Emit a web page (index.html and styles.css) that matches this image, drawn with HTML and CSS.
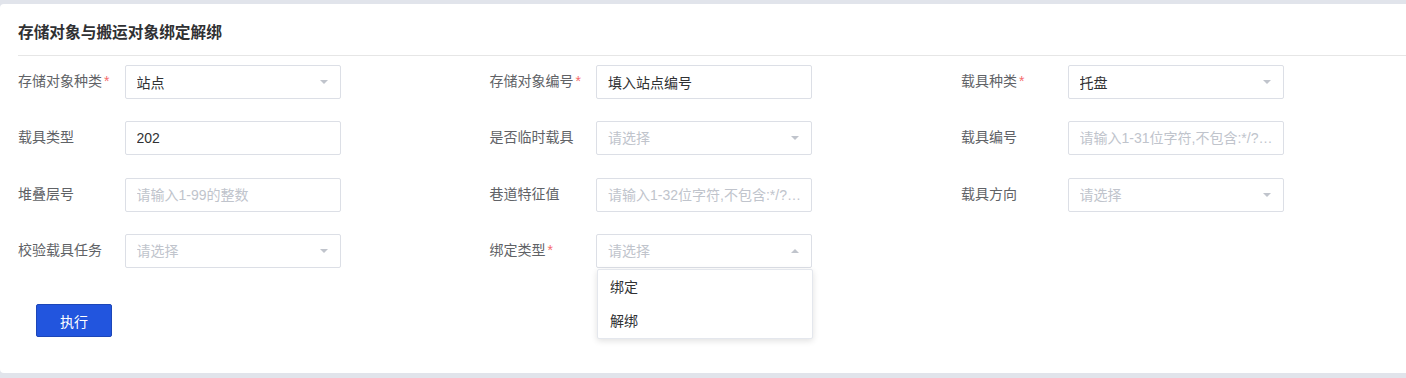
FILE: index.html
```html
<!DOCTYPE html>
<html lang="zh-CN">
<head>
    <meta charset="UTF-8">
    <meta name="viewport" content="width=device-width, initial-scale=1.0">
    <title>存储对象与搬运对象绑定解绑</title>
    <link rel="stylesheet" href="styles.css">
</head>
<body>
    <div class="card">
        <div class="card-header">存储对象与搬运对象绑定解绑</div>
        <div class="card-body">
            <div class="form-grid">
                <!-- row 1 -->
                <div class="form-item">
                    <label class="form-label required">存储对象种类</label>
                    <div class="field">
                        <input class="field-input" type="text" value="站点" readonly>
                        <span class="arrow"></span>
                    </div>
                </div>
                <div class="form-item">
                    <label class="form-label required">存储对象编号</label>
                    <div class="field">
                        <input class="field-input" type="text" value="填入站点编号">
                    </div>
                </div>
                <div class="form-item">
                    <label class="form-label required">载具种类</label>
                    <div class="field">
                        <input class="field-input" type="text" value="托盘" readonly>
                        <span class="arrow"></span>
                    </div>
                </div>

                <!-- row 2 -->
                <div class="form-item">
                    <label class="form-label">载具类型</label>
                    <div class="field">
                        <input class="field-input" type="text" value="202">
                    </div>
                </div>
                <div class="form-item">
                    <label class="form-label">是否临时载具</label>
                    <div class="field">
                        <input class="field-input" type="text" placeholder="请选择" readonly>
                        <span class="arrow"></span>
                    </div>
                </div>
                <div class="form-item">
                    <label class="form-label">载具编号</label>
                    <div class="field">
                        <input class="field-input" type="text" placeholder='请输入1-31位字符,不包含:*/?"<>|\'>
                    </div>
                </div>

                <!-- row 3 -->
                <div class="form-item">
                    <label class="form-label">堆叠层号</label>
                    <div class="field">
                        <input class="field-input" type="text" placeholder="请输入1-99的整数">
                    </div>
                </div>
                <div class="form-item">
                    <label class="form-label">巷道特征值</label>
                    <div class="field">
                        <input class="field-input" type="text" placeholder='请输入1-32位字符,不包含:*/?"<>|\'>
                    </div>
                </div>
                <div class="form-item">
                    <label class="form-label">载具方向</label>
                    <div class="field">
                        <input class="field-input" type="text" placeholder="请选择" readonly>
                        <span class="arrow"></span>
                    </div>
                </div>

                <!-- row 4 -->
                <div class="form-item">
                    <label class="form-label">校验载具任务</label>
                    <div class="field">
                        <input class="field-input" type="text" placeholder="请选择" readonly>
                        <span class="arrow"></span>
                    </div>
                </div>
                <div class="form-item">
                    <label class="form-label required">绑定类型</label>
                    <div class="field is-open">
                        <input class="field-input" type="text" placeholder="请选择" readonly>
                        <span class="arrow arrow-up"></span>
                        <ul class="dropdown">
                            <li class="dropdown-item">绑定</li>
                            <li class="dropdown-item">解绑</li>
                        </ul>
                    </div>
                </div>
            </div>

            <div class="actions">
                <button class="btn-primary">执行</button>
            </div>
        </div>
    </div>
</body>
</html>
```

FILE: styles.css
```css
body {
    margin: 0;
    padding-top: 4px;
    background-color: #e1e4eb;
    font-family: "Liberation Sans", "Noto Sans CJK SC", sans-serif;
    font-size: 14px;
    color: #303133;
}
.card {
    height: 369px;
    background-color: #fff;
    border-radius: 4px 0 0 4px;
    box-sizing: border-box;
}
.card-header {
    margin-left: 18px;
    padding: 18px 0 11px;
    line-height: 22px;
    font-size: 15.7px;
    font-weight: bold;
    color: #303133;
    border-bottom: 1px solid #e6e6e6;
}
.card-body {
    padding: 9px 0 0 18px;
}
.form-grid {
    display: grid;
    grid-template-columns: 471.5px 471.5px 1fr;
    row-gap: 22.4px;
}
.form-item {
    display: flex;
    align-items: center;
    height: 34px;
}
.form-label {
    width: 106.5px;
    flex-shrink: 0;
    color: #606266;
    line-height: 20px;
    margin-top: -2px;
}
.form-label.required::after {
    content: "*";
    color: #f56c6c;
    margin-left: 2px;
}
.field {
    position: relative;
    display: flex;
    align-items: center;
    width: 216px;
    height: 34px;
    box-sizing: border-box;
    border: 1px solid #dcdfe6;
    border-radius: 2px;
    background-color: #fff;
}
.field-input {
    flex: 1;
    min-width: 0;
    height: 100%;
    padding: 0 6px 0 11px;
    border: none;
    outline: none;
    background: transparent;
    font-family: inherit;
    font-size: 14px;
    color: #303133;
    text-overflow: ellipsis;
}
.field-input::placeholder {
    color: #c0c4cc;
}
.arrow {
    flex-shrink: 0;
    width: 0;
    height: 0;
    margin-right: 12px;
    border-left: 4.5px solid transparent;
    border-right: 4.5px solid transparent;
    border-top: 4.5px solid #c0c4cc;
}
.arrow-up {
    border-top: none;
    border-bottom: 4.5px solid #c0c4cc;
}
.dropdown {
    position: absolute;
    top: 34px;
    left: 0;
    width: 216px;
    box-sizing: border-box;
    margin: 0;
    padding: 0;
    list-style: none;
    background-color: #fff;
    border: 1px solid #e4e7ed;
    border-radius: 2px;
    box-shadow: 0 2px 6px rgba(0, 0, 0, 0.12);
    z-index: 10;
}
.dropdown-item {
    height: 34px;
    line-height: 34px;
    padding: 0 12px;
    color: #303133;
}
.actions {
    padding: 36px 0 0 18px;
}
.btn-primary {
    width: 76px;
    height: 33px;
    padding: 0;
    background-color: #2255de;
    color: #fff;
    border: 1px solid #1c46b8;
    border-radius: 2px;
    font-family: inherit;
    font-size: 14px;
    cursor: pointer;
}
```
